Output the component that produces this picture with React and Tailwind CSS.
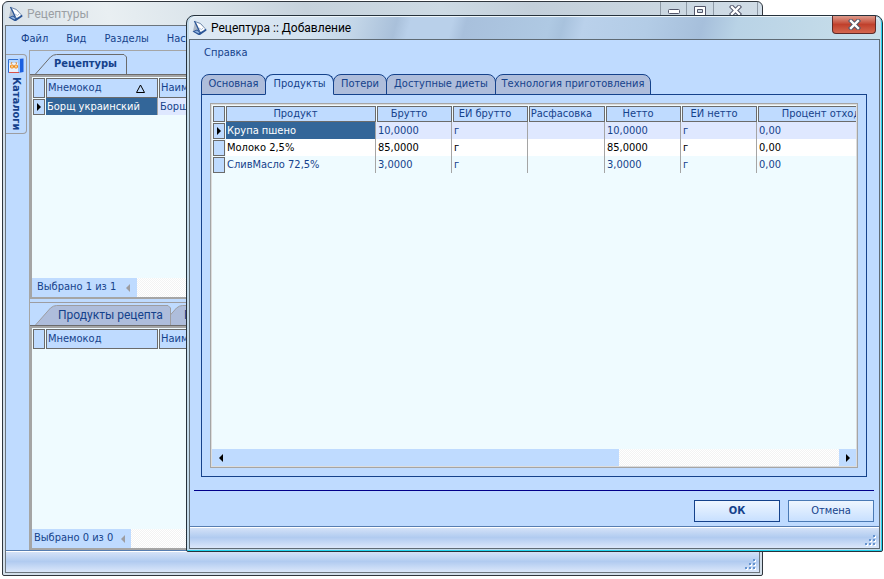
import clsx from 'clsx';

const columns = [
  { title: 'Продукт', key: 'product' },
  { title: 'Брутто', key: 'gross' },
  { title: 'ЕИ брутто', key: 'grossUnit' },
  { title: 'Расфасовка', key: 'packing' },
  { title: 'Нетто', key: 'net' },
  { title: 'ЕИ нетто', key: 'netUnit' },
  { title: 'Процент отхода', key: 'waste' },
];

const products = [
  { product: 'Крупа пшено', gross: '10,0000', grossUnit: 'г', packing: '', net: '10,0000', netUnit: 'г', waste: '0,00' },
  { product: 'Молоко 2,5%', gross: '85,0000', grossUnit: 'г', packing: '', net: '85,0000', netUnit: 'г', waste: '0,00' },
  { product: 'СливМасло 72,5%', gross: '3,0000', grossUnit: 'г', packing: '', net: '3,0000', netUnit: 'г', waste: '0,00' },
];

const rowStyles = ['bg-[#dfe8ff]', 'bg-white text-black', ''];

const dialogTabs = ['Основная', 'Продукты', 'Потери', 'Доступные диеты', 'Технология приготовления'];

function AppIcon() {
  return (
    <svg width="15" height="16" viewBox="0 0 15 16" className="shrink-0">
      <path d="M3 2 L1 11 L4 12 L7 10 Z" fill="#aab6c6" />
      <path d="M0.5 11.5 L5 9.5 L9 12 L14 8.5 L14.5 10.5 L8 15 L6.5 15 Z" fill="#2b5596" />
      <path d="M2.5 11.5 L5 10.5 L7.5 12.5 L6.5 13.5 Z" fill="#8fb2de" />
      <path d="M3 1.5 L12.5 7 L12 10 L7.5 11.5 Z" fill="#fff" />
      <path d="M2.5 1 L5 6 L7.5 11.5" fill="none" stroke="#2b5596" strokeWidth="1.4" />
      <path d="M3 1.5 L8.5 3.5 L13 8.5" fill="none" stroke="#7088aa" strokeWidth="1" />
      <path d="M7 8 L9.5 9.5 L11 8" fill="none" stroke="#9fb4d0" strokeWidth="0.8" />
    </svg>
  );
}

function CatalogIcon() {
  return (
    <svg width="16" height="16" viewBox="0 0 16 16" className="shrink-0">
      <path d="M0.5 1.5 H11.5 V14.5 H0.5 Z" fill="#eaf1fb" stroke="#2f6fd0" />
      <path d="M1 2 H11 V5 H1 Z" fill="#bcd9fb" />
      <path d="M10 1 L15.5 0.5 V14 L10 15 Z" fill="#1b5fe0" />
      <path d="M10 1 L12 1 L12 14.5 L10 15 Z" fill="#9cc6ff" />
      <rect x="2.5" y="7" width="3" height="3" rx="1" fill="#fbd08a" stroke="#ee8a1d" />
      <rect x="6.5" y="7" width="3" height="3" rx="1" fill="#fbd08a" stroke="#ee8a1d" />
      <path d="M3 6 L4 4 M8.5 6 L8 4" stroke="#e08a30" />
      <path d="M1 14.5 H11" stroke="#d9534a" />
    </svg>
  );
}

function CloseGlyph() {
  return (
    <svg width="13" height="11" viewBox="0 0 13 11">
      <path d="M3 2 L10 9 M10 2 L3 9" stroke="#53566a" strokeWidth="4.4" strokeLinecap="square" />
      <path d="M3 2 L10 9 M10 2 L3 9" stroke="#fff" strokeWidth="2.4" strokeLinecap="square" />
    </svg>
  );
}

function Arrow({ dir, className }) {
  return (
    <svg width="4" height="8" viewBox="0 0 4 8" className={className}>
      <path d={dir === 'left' ? 'M4 0 V8 L0 4 Z' : 'M0 0 V8 L4 4 Z'} fill="currentColor" />
    </svg>
  );
}

function Grip() {
  const dots = [[8, 0], [4, 4], [8, 4], [0, 8], [4, 8], [8, 8]];
  return (
    <svg width="11" height="11" viewBox="0 0 11 11">
      {dots.map(([x, y]) => (
        <g key={`${x}-${y}`}>
          <rect x={x + 1} y={y + 1} width="2" height="2" fill="#fff" />
          <rect x={x} y={y} width="2" height="2" fill="#6593cf" />
        </g>
      ))}
    </svg>
  );
}

function StatusBar() {
  return (
    <div className="flex h-[22px] shrink-0 items-end justify-end border-t border-[#567db1] bg-linear-to-b from-[#d7e4f8] via-[#b1cbf0] to-[#dbe7fa] pr-[3px] pb-[2px] shadow-[inset_0_1px_0_#fff]">
      <Grip />
    </div>
  );
}

function SlantTab({ label, active, width, className }) {
  return (
    <button type="button" className={clsx('relative h-[20px] shrink-0 text-left', className)}>
      <svg viewBox={`0 0 ${width} 20`} preserveAspectRatio="none" className="absolute inset-0 h-full w-full">
        <path
          d={`M0.5 20 L15.5 3 Q18.5 0.5 21.5 0.5 H${width - 3} L${width - 0.5} 3 V20`}
          fill={active ? '#bfdbff' : '#aebddb'}
          stroke={active ? '#6b6b6b' : '#9d9da1'}
        />
      </svg>
      <span className="relative">{label}</span>
    </button>
  );
}

function RowMarker({ current }) {
  return (
    <div className="flex h-4 w-3 items-center justify-center border border-[#6b6b6b] bg-[#bfdbff] text-black">
      {current && <Arrow dir="right" />}
    </div>
  );
}

const hatch = 'bg-[repeating-conic-gradient(#ffffff_0_25%,#f3f3f3_0_50%)] bg-[length:2px_2px]';

function ListPane({ rows, count, className, countClassName }) {
  return (
    <div className={clsx('flex min-h-0 flex-col overflow-hidden border-2 border-r-0 border-[#a5a5a5] bg-[#effbff]', className)}>
      <div className="min-h-0 flex-1 overflow-hidden pt-px pl-px">
        <table className="w-[560px] table-fixed border-separate border-spacing-0 text-left">
          <colgroup>
            <col className="w-[13px]" />
            <col className="w-[113px]" />
            <col />
          </colgroup>
          <thead>
            <tr>
              <th className="p-0 pr-px"><div className="h-5 border border-[#6b6b6b] bg-[#bfdbff]" /></th>
              <th className="p-0 pr-px font-normal">
                <div className="flex h-5 items-center justify-between border border-[#6b6b6b] bg-[#bfdbff] pr-3 pl-px">
                  Мнемокод
                  {rows.length > 0 && (
                    <svg width="9" height="9" viewBox="0 0 9 9"><path d="M4.5 1 L8.5 8.5 H0.5 Z" fill="none" stroke="#000" /></svg>
                  )}
                </div>
              </th>
              <th className="p-0 font-normal"><div className="flex h-5 items-center border border-[#6b6b6b] bg-[#bfdbff] pl-px">Наименование</div></th>
            </tr>
          </thead>
          <tbody>
            {rows.map((name) => (
              <tr key={name} className="h-[17px]">
                <td className="p-0 pt-px"><RowMarker current /></td>
                <td className="bg-[#dfe8ff] p-0 pr-px"><div className="h-[17px] border-r border-[#a5a5a5] bg-[#336699] pl-px leading-[17px] text-white">{name}</div></td>
                <td className="bg-[#dfe8ff] p-0 pl-px leading-[17px]">{name}</td>
              </tr>
            ))}
          </tbody>
        </table>
      </div>
      <div className={clsx('flex h-[19px] shrink-0', hatch)}>
        <div className={clsx('flex items-center bg-[#bfdbff]', countClassName)}>
          {count}
          <Arrow dir="left" className="text-[#9d9da1]" />
        </div>
      </div>
    </div>
  );
}

function MainWindow() {
  return (
    <div className="absolute top-px right-[121px] bottom-[3px] left-[2px] flex flex-col rounded-t-md rounded-b-xs border border-[#30363d] bg-[#d3dfea] px-[2px] pb-[2px]">
      <div className="flex h-[23px] shrink-0 items-center gap-1 rounded-t-md bg-[linear-gradient(75deg,#dbe3e9_0%,#e9eff2_14%,#dde6ec_24%,#c6d2dc_40%,#cddae4_58%,#c3cfda_70%,#d0dce6_100%)] pl-[3px]">
        <AppIcon />
        <span className="flex-1 font-['Roboto',sans-serif] text-[12px] text-[#9b9fa4]">Рецептуры</span>
        <div className="mr-[2px] flex h-[18px] self-start rounded-b border border-t-0 border-[#8f9aa6] text-[#53566a]">
          <button type="button" aria-label="Свернуть" className="flex w-[26px] items-center justify-center border-r border-[#8f9aa6] pt-[2px]">
            <svg width="12" height="5" viewBox="0 0 12 5"><rect x="0.5" y="0.5" width="11" height="4" rx="1" fill="#fff" stroke="#53566a" /></svg>
          </button>
          <button type="button" aria-label="Развернуть" className="flex w-[27px] items-center justify-center border-r border-[#8f9aa6]">
            <svg width="12" height="10" viewBox="0 0 12 10"><path fillRule="evenodd" d="M0.5 0.5 H11.5 V9.5 H0.5 Z M3.5 3.5 V6.5 H8.5 V3.5 Z" fill="#fff" stroke="#53566a" /></svg>
          </button>
          <button type="button" aria-label="Закрыть" className="flex w-[43px] items-center justify-center"><CloseGlyph /></button>
        </div>
      </div>
      <div className="flex min-h-0 flex-1 flex-col border border-[#6c757d] bg-[#bfdbff]">
        <nav className="flex h-6 shrink-0 items-center gap-[18px] pt-[2px] pl-[15px]">
          <button type="button">Файл</button>
          <button type="button">Вид</button>
          <button type="button">Разделы</button>
          <button type="button">Настройки</button>
        </nav>
        <div className="flex min-h-0 flex-1">
          <aside className="w-[23px] shrink-0 pt-1">
            <button type="button" className="flex h-[80px] w-[21px] flex-col items-center gap-[3px] rounded-r border border-l-0 border-[#9d9da1] pt-[3px]">
              <CatalogIcon />
              <span className="text-[11px] leading-[14px] font-bold [writing-mode:vertical-rl]">Каталоги</span>
            </button>
          </aside>
          <div className="flex min-w-0 flex-1 flex-col border-t border-l border-[#a5a5a5]">
            <div className="flex h-6 shrink-0 items-end border-b border-[#6b6b6b] pl-[5px]">
              <SlantTab label="Рецептуры" active width={92} className="w-[92px] pl-[19px] font-bold" />
            </div>
            <ListPane rows={['Борщ украинский']} count="Выбрано 1 из 1" className="flex-1" countClassName="gap-[10px] pr-[7px] pl-[5px]" />
            <div className="mt-[3px] flex h-6 shrink-0 items-end border-t border-b border-t-[#9d9da1] border-b-[#6b6b6b] pl-[5px]">
              <SlantTab label="Продукты рецепта" width={136} className="z-10 w-[136px] pl-[23px] font-['Roboto',sans-serif] text-[12px]" />
              <SlantTab label="Потери" width={90} className="-ml-[10px] w-[90px] pl-[23px] font-['Roboto',sans-serif] text-[12px]" />
            </div>
            <ListPane rows={[]} count="Выбрано 0 из 0" className="flex-1" countClassName="gap-2 pr-[6px] pl-[2px]" />
          </div>
        </div>
        <StatusBar />
      </div>
    </div>
  );
}

function ProductsGrid() {
  return (
    <div className="flex min-h-0 flex-1 flex-col border border-[#a5a5a5] bg-[#effbff] shadow-[inset_0_0_0_1px_#dcdcdc]">
      <div className="mr-px min-h-0 flex-1 overflow-hidden pt-[2px] pl-[2px]">
        <table className="w-[689px] table-fixed border-separate border-spacing-0 text-left">
          <colgroup>
            <col className="w-[13px]" />
            <col className="w-[151px]" />
            <col className="w-[76px]" />
            <col className="w-[76px]" />
            <col className="w-[77px]" />
            <col className="w-[76px]" />
            <col className="w-[76px]" />
            <col className="w-[144px]" />
          </colgroup>
          <thead>
            <tr>
              <th className="p-0 pr-px"><div className="h-4 border border-[#6b6b6b] bg-[#bfdbff]" /></th>
              {columns.map((c) => (
                <th key={c.key} className="p-0 pr-px font-normal">
                  <div className="h-4 border border-[#6b6b6b] bg-[#bfdbff] pr-[11px] text-center leading-[14px] whitespace-nowrap">{c.title}</div>
                </th>
              ))}
            </tr>
          </thead>
          <tbody>
            {products.map((p, i) => (
              <tr key={p.product} className={rowStyles[i]}>
                <td className="bg-[#effbff] p-0 pt-px"><RowMarker current={i === 0} /></td>
                {columns.map((c, j) => (
                  <td key={c.key} className="p-0 pr-px">
                    <div className={clsx('h-[17px] border-r border-[#a5a5a5] pl-px leading-[17px]', i === 0 && j === 0 && 'bg-[#336699] text-white')}>{p[c.key]}</div>
                  </td>
                ))}
              </tr>
            ))}
          </tbody>
        </table>
      </div>
      <div className={clsx('mx-px mb-px flex h-[17px] shrink-0 text-black', hatch)}>
        <button type="button" aria-label="Влево" className="flex w-[17px] items-center justify-center bg-[#bfdbff]"><Arrow dir="left" /></button>
        <div className="flex flex-1"><div className="w-[64%] bg-[#bfdbff]" /></div>
        <button type="button" aria-label="Вправо" className="flex w-[17px] items-center justify-center bg-[#bfdbff]"><Arrow dir="right" /></button>
      </div>
    </div>
  );
}

const tabWidths = ['w-[65px]', 'w-[69px]', 'w-[54px]', 'w-[110px]', 'w-[156px]'];

function RecipeDialog() {
  return (
    <div className="absolute top-[15px] right-px bottom-[27px] left-[186px] z-20 flex flex-col rounded-t-lg rounded-b-xs border border-[#26323c] bg-[#c3daea] px-[2px] pb-[2px] shadow-[inset_-1px_-1px_0_#22d3ee]">
      <div className="flex h-[23px] shrink-0 items-center gap-1 rounded-t-lg bg-[linear-gradient(105deg,#dfeaf4_0%,#d3e2f0_18%,#c3d6e8_24%,#a9c0da_30%,#b9d0ea_32%,#b9d0ea_38%,#a8c0dc_40%,#afc9e3_52%,#a8c2dd_54%,#bad1eb_57%,#b3cce6_66%,#a6bfdb_74%,#b9d3e6_79%,#c9dfea_100%)] pl-[3px] shadow-[inset_0_1px_0_#eef6fa]">
        <AppIcon />
        <span className="flex-1 font-['Roboto',sans-serif] text-[12px] text-black">Рецептура :: Добавление</span>
        <button type="button" aria-label="Закрыть" className="mr-1 flex h-[18px] w-[44px] items-center justify-center self-start rounded-b border border-t-0 border-[#5e2a28] bg-linear-to-b from-[#dd9a8c] via-[#c0402c] to-[#d4674f]">
          <CloseGlyph />
        </button>
      </div>
      <div className="flex min-h-0 flex-1 flex-col border border-[#5f6b75] bg-[#bfdbff]">
        <nav className="flex h-6 shrink-0 items-center pt-[2px] pl-[14px]">
          <button type="button">Справка</button>
        </nav>
        <div className="mt-[10px] mr-3 ml-[11px] flex min-h-0 flex-1 flex-col">
          <div role="tablist" className="flex h-[21px] shrink-0">
            {dialogTabs.map((t, i) => (
              <button
                key={t}
                type="button"
                role="tab"
                aria-selected={i === 1}
                className={clsx(
                  '-mr-px shrink-0 rounded-t-lg border border-[#15428b] whitespace-nowrap',
                  tabWidths[i],
                  i === 1 ? 'relative border-b-[#bfdbff] bg-[#bfdbff]' : 'bg-[#aebddb]'
                )}
              >
                {t}
              </button>
            ))}
          </div>
          <div className="-mt-px flex min-h-0 flex-1 flex-col border border-[#15428b] p-2">
            <ProductsGrid />
          </div>
        </div>
        <div className="mt-[13px] mr-[5px] ml-1 border-t border-[#00008b]" />
        <div className="flex shrink-0 justify-end gap-2 pt-[9px] pr-[5px] pb-1">
          <button type="button" className="h-[22px] w-[86px] border border-[#15428b] bg-linear-to-b from-[#eef6ff] to-[#c8e0ff] font-bold">ОК</button>
          <button type="button" className="h-[22px] w-[86px] border border-[#4a7ab5] bg-linear-to-b from-[#eef6ff] to-[#c8e0ff]">Отмена</button>
        </div>
        <StatusBar />
      </div>
    </div>
  );
}

export default function App() {
  return (
    <div className="relative h-screen min-h-[400px] overflow-hidden bg-white font-['DejaVu_Sans_Condensed','DejaVu_Sans',sans-serif] text-[11px] text-[#15428b]">
      <MainWindow />
      <RecipeDialog />
    </div>
  );
}
